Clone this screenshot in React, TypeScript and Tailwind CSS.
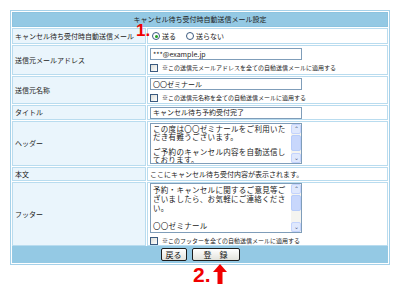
import React from 'react';

const font = { fontFamily: '"Noto Sans CJK JP", "Noto Sans", sans-serif' };

const Label: React.FC<{ text: string }> = ({ text }) => (
  <div className="flex items-center border border-[#b9dcef] bg-[#eaf5fc] pl-[2px] text-[7px] text-[#222]">{text}</div>
);

const Check: React.FC<{ text: string }> = ({ text }) => (
  <div className="mt-[3px] flex items-center gap-[4px] text-[6px] text-[#222]">
    <span className="inline-block h-[8px] w-[8px] border border-[#3c5b80] bg-gradient-to-br from-[#dcdcd6] to-white" />
    <span>{text}</span>
  </div>
);

const TextBox: React.FC<{ value: string }> = ({ value }) => (
  <div className="flex h-[12px] w-[152px] items-center border border-[#7f9db9] bg-white pl-[2px] text-[7px] text-[#222]">{value}</div>
);

const Area: React.FC<{ lines: string[]; h: string; lh: string }> = ({ lines, h, lh }) => (
  <div className={`flex w-[152px] border border-[#7f9db9] bg-white ${h}`}>
    <div className="flex-1 overflow-hidden pl-[2px] pt-[1px] text-[7.5px] tracking-[0.3px] text-[#222]">
      {lines.map((l, i) => (
        <div key={i} className={`whitespace-nowrap ${lh}`}>{l}</div>
      ))}
    </div>
    <div className="flex w-[10px] flex-col bg-[#f4f4f0]">
      <div className="flex h-[10px] items-center justify-center rounded-[2px] border border-[#c3d3fd] bg-[#dfe8fd] text-[6px] leading-none text-[#4d6185]">⌃</div>
      <div className="mt-[1px] h-[16px] rounded-[2px] border border-[#b8cdfa] bg-[#c8d7fc]" />
      <div className="flex-1" />
      <div className="flex h-[10px] items-center justify-center rounded-[2px] border border-[#c3d3fd] bg-[#dfe8fd] text-[6px] leading-none text-[#4d6185]">⌄</div>
    </div>
  </div>
);

const Btn: React.FC<{ text: string; w: string }> = ({ text, w }) => (
  <div className={`flex h-[13px] items-center justify-center rounded-[2px] border border-[#1c1c1c] bg-gradient-to-b from-white to-[#e3e3dc] text-[8px] text-[#111] ${w}`}>{text}</div>
);

export default function App() {
  return (
    <div className="relative h-[292px] w-[400px] bg-white" style={font}>
      <div className="absolute left-[10px] top-[10px] flex w-[380px] flex-col gap-[1px] border border-[#a6d1e9] bg-white p-[1px]">
        <div className="flex h-[15px] items-center justify-center border border-[#8cc3df] bg-[#94c9e4] text-[7px] text-[#222]">
          キャンセル待ち受付時自動送信メール設定
        </div>

        <div className="grid h-[16px] grid-cols-[134px_1fr] gap-[1px]">
          <Label text="キャンセル待ち受付時自動送信メール" />
          <div className="flex items-center border border-[#b9dcef] bg-white pl-[4px] text-[7px] text-[#222]">
            <span className="mr-[2px] flex h-[8px] w-[8px] items-center justify-center rounded-full border border-[#3c5b80] bg-white">
              <span className="h-[3px] w-[3px] rounded-full bg-[#21a121]" />
            </span>
            <span>送る</span>
            <span className="ml-[10px] mr-[2px] inline-block h-[8px] w-[8px] rounded-full border border-[#3c5b80] bg-white" />
            <span>送らない</span>
          </div>
        </div>

        <div className="grid h-[30px] grid-cols-[134px_1fr] gap-[1px]">
          <Label text="送信元メールアドレス" />
          <div className="flex flex-col justify-center border border-[#b9dcef] bg-white pl-[2px]">
            <TextBox value="***@example.jp" />
            <Check text="※この送信元メールアドレスを全ての自動送信メールに適用する" />
          </div>
        </div>

        <div className="grid h-[28px] grid-cols-[134px_1fr] gap-[1px]">
          <Label text="送信元名称" />
          <div className="flex flex-col justify-center border border-[#b9dcef] bg-white pl-[2px]">
            <TextBox value="〇〇ゼミナール" />
            <Check text="※この送信元名称を全ての自動送信メールに適用する" />
          </div>
        </div>

        <div className="grid h-[15px] grid-cols-[134px_1fr] gap-[1px]">
          <Label text="タイトル" />
          <div className="flex items-center border border-[#b9dcef] bg-white pl-[2px]">
            <TextBox value="キャンセル待ち予約受付完了" />
          </div>
        </div>

        <div className="grid h-[45px] grid-cols-[134px_1fr] gap-[1px]">
          <Label text="ヘッダー" />
          <div className="flex items-center border border-[#b9dcef] bg-white pl-[2px]">
            <Area
              h="h-[41px]"
              lh="h-[7.8px] leading-[7.8px]"
              lines={['この度は〇〇ゼミナールをご利用いた', 'だき有難うございます。', '', 'ご予約のキャンセル内容を自動送信し', 'ております。']}
            />
          </div>
        </div>

        <div className="grid h-[14px] grid-cols-[134px_1fr] gap-[1px]">
          <Label text="本文" />
          <div className="flex items-center border border-[#b9dcef] bg-white pl-[2px] text-[7px] text-[#222]">
            ここにキャンセル待ち受付内容が表示されます。
          </div>
        </div>

        <div className="grid h-[63px] grid-cols-[134px_1fr] gap-[1px]">
          <Label text="フッター" />
          <div className="flex flex-col justify-center border border-[#b9dcef] bg-white pl-[2px]">
            <Area
              h="h-[50px]"
              lh="h-[9px] leading-[9px]"
              lines={['予約・キャンセルに関するご意見等ご', 'ざいましたら、お気軽にご連絡くださ', 'い。', '', '〇〇ゼミナール']}
            />
            <Check text="※このフッターを全ての自動送信メールに適用する" />
          </div>
        </div>

        <div className="flex h-[17px] items-center justify-center gap-[5px] bg-[#94c9e4]">
          <Btn text="戻る" w="w-[26px]" />
          <Btn text="登　録" w="w-[48px]" />
        </div>
      </div>

      <div className="absolute left-[136px] top-[22px] text-[17px] font-bold leading-none text-[#f00000]" style={{ fontFamily: '"Liberation Sans", sans-serif' }}>
        1.
      </div>

      <div className="absolute left-[193px] top-[264px] flex items-start gap-[2px]">
        <span className="text-[21px] font-bold leading-none text-[#f00000]" style={{ fontFamily: '"Liberation Sans", sans-serif' }}>2.</span>
        <svg width="14" height="20" viewBox="0 0 14 20">
          <path d="M7 0 L14 8 L9.5 8 L9.5 20 L4.5 20 L4.5 8 L0 8 Z" fill="#f00000" />
        </svg>
      </div>
    </div>
  );
}
